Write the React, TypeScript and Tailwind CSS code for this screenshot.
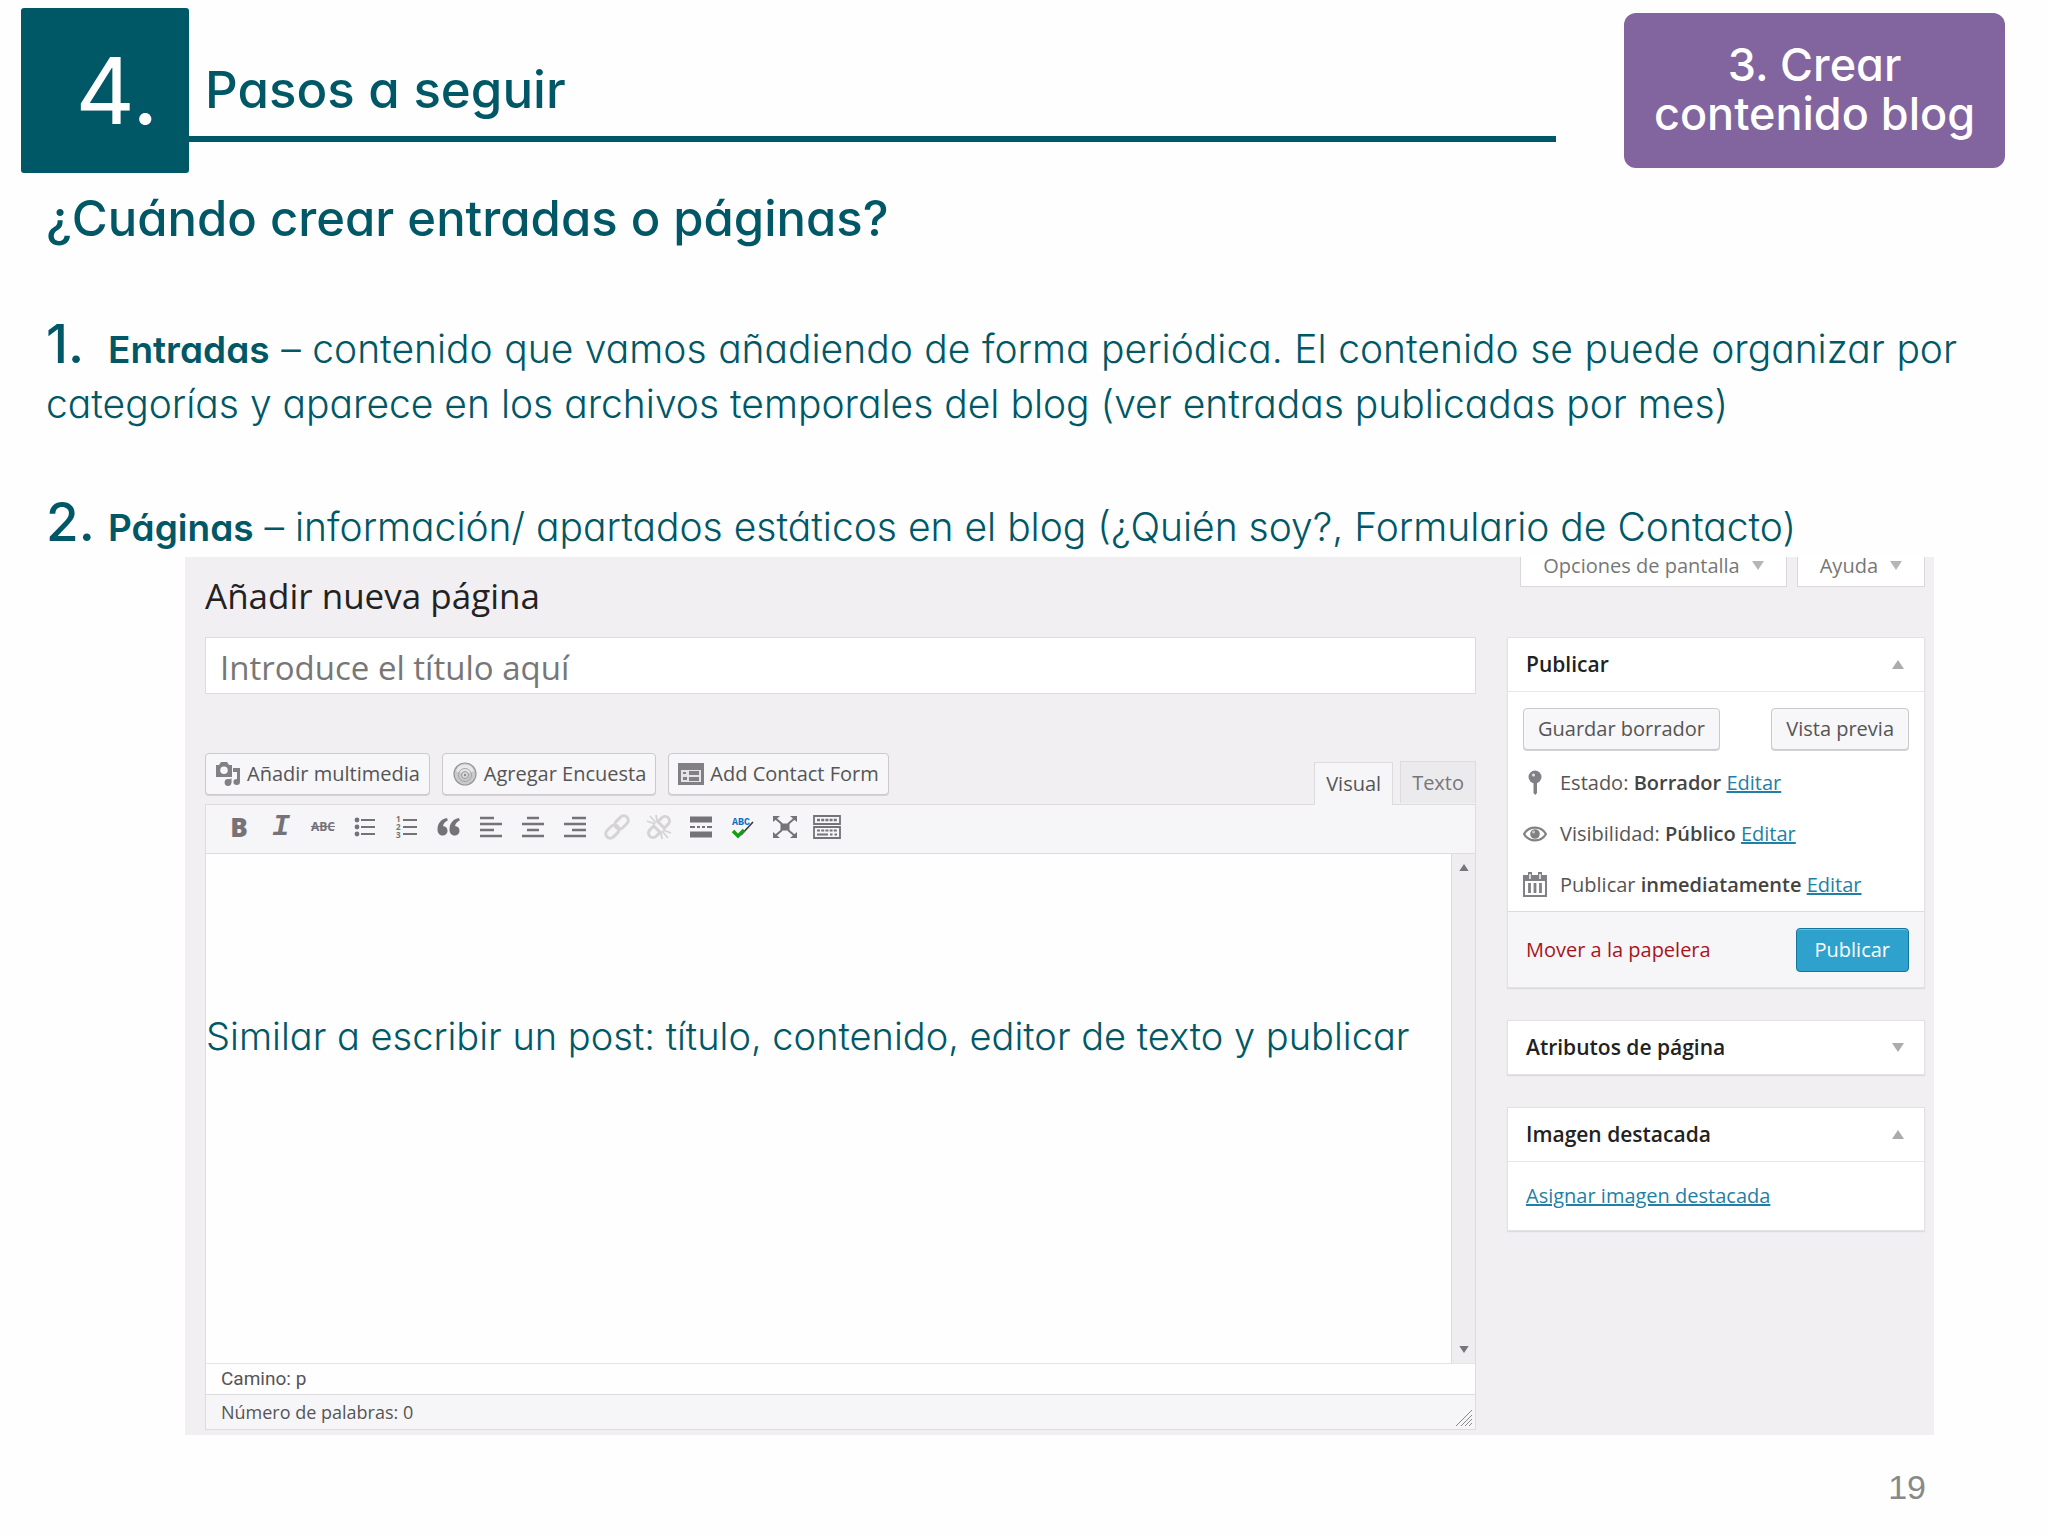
import type { ReactNode } from "react";

function Triangle({ up = false, className = "" }: { up?: boolean; className?: string }) {
  return (
    <svg viewBox="0 0 12 9" className={className || "h-[9px] w-3 text-[#a9abae]"} fill="currentColor" aria-hidden="true">
      <path d={up ? "M0 9 6 0l6 9z" : "M0 0h12L6 9z"} />
    </svg>
  );
}

function Icon({ children, className = "" }: { children: ReactNode; className?: string }) {
  return (
    <svg viewBox="0 0 28 28" className={`h-7 w-7 ${className}`} fill="none" stroke="currentColor" aria-hidden="true">
      {children}
    </svg>
  );
}

const tools: { label: string; icon: ReactNode }[] = [
  {
    label: "Negrita",
    icon: <span className="text-[26px] leading-7 font-extrabold">B</span>,
  },
  {
    label: "Cursiva",
    icon: <span className="font-['Liberation_Mono',monospace] text-[30px] leading-7 font-bold italic">I</span>,
  },
  {
    label: "Tachado",
    icon: <span className="text-[12px] leading-7 font-bold line-through">ABC</span>,
  },
  {
    label: "Lista con viñetas",
    icon: (
      <Icon>
        <path d="M10 7h14M10 14h14M10 21h14" strokeWidth="1.8" />
        <g fill="currentColor" stroke="none">
          <circle cx="6" cy="7" r="2.4" />
          <circle cx="6" cy="14" r="2.4" />
          <circle cx="6" cy="21" r="2.4" />
        </g>
      </Icon>
    ),
  },
  {
    label: "Lista numerada",
    icon: (
      <Icon>
        <path d="M10 7h14M10 14h14M10 21h14" strokeWidth="1.8" />
        <g fill="currentColor" stroke="none" fontSize="8" fontWeight="700">
          <text x="3" y="9">1</text>
          <text x="3" y="17">2</text>
          <text x="3" y="25">3</text>
        </g>
      </Icon>
    ),
  },
  {
    label: "Cita",
    icon: (
      <Icon>
        <g fill="currentColor" stroke="none">
          <path d="M12 5C6.500 6 2.500 10 2.500 16.500c0 3.500 2 6 5 6 2.800 0 5-2 5-4.800s-2-4.600-4.500-4.700C8.500 10.500 10 8.500 12.800 7.500z" />
          <path d="M24 5c-5.500 1-9.500 5-9.500 11.500 0 3.500 2 6 5 6 2.800 0 5-2 5-4.800s-2-4.600-4.500-4.700c.5-2.500 2-4.500 4.800-5.500z" />
        </g>
      </Icon>
    ),
  },
  {
    label: "Alinear a la izquierda",
    icon: <Icon><path d="M3 5h14M3 11h22M3 17h14M3 23h22" strokeWidth="2.6" /></Icon>,
  },
  {
    label: "Centrar",
    icon: <Icon><path d="M8 5h12M3 11h22M8 17h12M3 23h22" strokeWidth="2.6" /></Icon>,
  },
  {
    label: "Alinear a la derecha",
    icon: <Icon><path d="M11 5h14M3 11h22M11 17h14M3 23h22" strokeWidth="2.6" /></Icon>,
  },
  {
    label: "Insertar enlace",
    icon: (
      <Icon className="text-[#d5d3d6]">
        <g strokeWidth="3" transform="rotate(-45 14 14)">
          <rect x="0" y="9.500" width="15" height="9" rx="4.500" />
          <rect x="13" y="9.500" width="15" height="9" rx="4.500" />
        </g>
      </Icon>
    ),
  },
  {
    label: "Quitar enlace",
    icon: (
      <Icon className="text-[#d5d3d6]">
        <g strokeWidth="3" transform="rotate(-45 14 14)">
          <path d="M11 9.500H5.500a4.500 4.500 0 0 0 0 9H11zM17 9.500h5.500a4.500 4.500 0 0 1 0 9H17z" />
        </g>
        <path d="M2 8l8 3M5 3l6 7M11 2l1 6M26 20l-8-3M23 25l-6-7M17 26l-1-6" strokeWidth="1.800" />
      </Icon>
    ),
  },
  {
    label: "Insertar etiqueta Leer más",
    icon: (
      <Icon>
        <path d="M3 6.500h22M3 21.500h22" strokeWidth="6" />
        <path d="M3 14h5M10 14h3M15 14h3M20 14h5" strokeWidth="2.200" />
      </Icon>
    ),
  },
  {
    label: "Revisar ortografía",
    icon: (
      <Icon>
        <text x="3" y="12" fill="#0a6fc0" stroke="none" fontSize="10" fontWeight="700" fontFamily="Liberation Mono">ABC</text>
        <path d="M24 9 12 22" stroke="#333" strokeWidth="1.500" />
        <path d="M4 18l5 5 6-6" stroke="#12a012" strokeWidth="3.500" />
      </Icon>
    ),
  },
  {
    label: "Pantalla completa",
    icon: (
      <Icon>
        <path d="M4 5l7 6M24 5l-7 6M4 23l7-6M24 23l-7-6" strokeWidth="2" />
        <g fill="currentColor" stroke="none">
          <path d="M9.500 10.500h9v7h-9zM2 3h7l-7 6zM26 3h-7l7 6zM2 25h7l-7-6zM26 25h-7l7-6z" />
        </g>
      </Icon>
    ),
  },
  {
    label: "Mostrar la barra de herramientas",
    icon: (
      <Icon>
        <path d="M1 3h26v8H1zM1 14h26v11H1z" strokeWidth="1.800" />
        <path d="M4 7h20" strokeWidth="2.400" strokeDasharray="3 1.200" />
        <path d="M4 17.500h20" strokeWidth="2.200" strokeDasharray="3 1.200" />
        <path d="M4 21.500h11M17 21.500h2.500M21.500 21.500H24" strokeWidth="2.200" />
      </Icon>
    ),
  },
];

function MediaIcon() {
  return (
    <svg viewBox="0 0 26 26" className="h-[26px] w-[26px] text-[#828085]" fill="currentColor" aria-hidden="true">
      <path fillRule="evenodd" d="M1 4h3l2-3h6l2 3h3v12H1zM9 5.500a3.800 3.800 0 1 0 0 7.600 3.800 3.800 0 0 0 0-7.600z" />
      <path d="M18 7h7v14a3.300 3 0 1 1-3-3v-7h-4z" />
      <path d="M16.500 17v4.500h-3V19z" />
      <circle cx="13" cy="21.500" r="3.400" />
    </svg>
  );
}

function PollIcon() {
  return (
    <svg viewBox="0 0 26 26" className="h-[26px] w-[26px]" fill="none" aria-hidden="true">
      <circle cx="13" cy="13" r="11" fill="#c9c9cb" stroke="#98989b" strokeWidth="1.200" />
      <path d="M4 10a9.500 9.500 0 0 1 18 0c-5 3-13 3-18 0z" fill="#e8e8ea" />
      <circle cx="13" cy="14" r="6.500" stroke="#a4a4a7" />
      <circle cx="13" cy="14" r="3.500" stroke="#98989b" fill="#dcdcde" />
      <circle cx="13" cy="14" r="1.200" fill="#8c8c8f" />
    </svg>
  );
}

function FormIcon() {
  return (
    <svg viewBox="0 0 26 26" className="h-[26px] w-[26px]" aria-hidden="true">
      <path d="M0 2h26v22H0z" fill="#828085" />
      <path d="M3 9h20v12H3z" fill="#e4e3e6" />
      <path d="M11 10h10v4H11zM11 16h10v4H11zM5 11h3v2H5zM5 16h4v3H5z" fill="#828085" />
    </svg>
  );
}

const mediaButtons = [
  { label: "Añadir multimedia", icon: <MediaIcon /> },
  { label: "Agregar Encuesta", icon: <PollIcon /> },
  { label: "Add Contact Form", icon: <FormIcon /> },
];

const status = [
  {
    label: "Estado:",
    value: "Borrador",
    icon: (
      <svg viewBox="0 0 24 26" className="h-[26px] w-6" fill="#828085" aria-hidden="true">
        <circle cx="12" cy="7" r="6.500" />
        <path d="M10.500 12h3.500v11l-1.700 2-1.800-2z" />
        <circle cx="10.500" cy="5" r="1.500" fill="#e4e4e6" />
      </svg>
    ),
  },
  {
    label: "Visibilidad:",
    value: "Público",
    icon: (
      <svg viewBox="0 0 24 26" className="h-[26px] w-6" fill="none" aria-hidden="true">
        <path d="M1 13c5-8.500 17-8.500 22 0-5 8.500-17 8.500-22 0z" stroke="#828085" strokeWidth="2.200" />
        <circle cx="12" cy="13" r="4.800" fill="#828085" />
        <circle cx="10.500" cy="11" r="1.500" fill="#c8c8ca" />
      </svg>
    ),
  },
  {
    label: "Publicar",
    value: "inmediatamente",
    icon: (
      <svg viewBox="0 0 24 26" className="h-[26px] w-6" fill="none" aria-hidden="true">
        <path d="M1 4h22v20H1z" stroke="#828085" strokeWidth="2" />
        <path d="M0 3h24v6H0zM5 0h4v7H5zM15 0h4v7h-4z" fill="#828085" />
        <path d="M7 2v5M17 2v5" stroke="#fff" strokeWidth="1.400" />
        <path d="M6.500 11v10M12 11v10M17.500 11v10" stroke="#828085" strokeWidth="2.800" />
      </svg>
    ),
  },
];

const button =
  "flex h-[42px] items-center rounded border border-[#cbc9cc] bg-[#f7f6f8] text-[20px] text-[#555] shadow-[0_1px_0_#d5d3d6]";

function PostBox({ title, open, children }: { title: string; open?: boolean; children?: ReactNode }) {
  return (
    <section className="border border-[#e3e1e4] bg-white shadow-[0_1px_1px_#dddbde]">
      <div className="flex h-[53px] items-center justify-between pr-5 pl-[18px]">
        <h3 className="text-[21px] font-semibold text-[#222]">{title}</h3>
        <button type="button" aria-label={title}>
          <Triangle up={open} />
        </button>
      </div>
      {children}
    </section>
  );
}

export default function App() {
  return (
    <div className="min-h-screen bg-[#fefefe] font-['Inter',sans-serif] text-[#005867] [font-feature-settings:'cv11']">
      <header className="flex items-start pt-2 pr-[43px] pl-[21px]">
        <div className="flex h-[165px] w-[168px] items-center justify-center rounded-[3px] bg-[#005867] pl-6 text-[92px] leading-none text-white">
          4.
        </div>
        <div className="flex h-[134px] flex-1 items-end border-b-6 border-[#005867] pb-4 pl-4">
          <h1 className="text-[51px] leading-[60px] font-medium">Pasos a seguir</h1>
        </div>
        <div className="mt-[5px] ml-[68px] flex h-[155px] w-[381px] items-center justify-center rounded-xl bg-[#82649f] pb-1 text-center text-[45px] leading-[49px] font-medium text-white">
          <p>
            3. Crear
            <br />
            contenido blog
          </p>
        </div>
      </header>

      <section className="pt-4 pr-[91px] pb-[2px] pl-[46px]">
        <h2 className="text-[49px] leading-[60px] font-medium">¿Cuándo crear entradas o páginas?</h2>
        <p className="mt-[68px] text-justify text-[39px] leading-[54px] font-light">
          <span className="inline-block w-[62px] text-[53px] font-medium">1.</span>
          <b className="text-[37px] font-semibold">Entradas</b> – contenido que vamos añadiendo de forma periódica. El
          contenido se puede organizar por categorías y aparece en los archivos temporales del blog (ver entradas
          publicadas por mes)
        </p>
        <p className="mt-16 text-[39px] leading-[54px] font-light">
          <span className="inline-block w-[62px] text-[53px] font-medium">2.</span>
          <b className="text-[37px] font-semibold">Páginas</b> – información/ apartados estáticos en el blog (¿Quién
          soy?, Formulario de Contacto)
        </p>
      </section>

      <main className="mr-[114px] ml-[185px] bg-[#f1eff2] pr-[9px] pb-[5px] pl-5 font-['Open_Sans',sans-serif] text-[20px] text-[#555]">
        <div className="flex h-20 items-start justify-between">
          <h2 className="pt-4 text-[35px] leading-[46px] text-[#222]">Añadir nueva página</h2>
          <div className="flex gap-[10px] text-[#777]">
            <button type="button" className="flex h-[30px] items-center gap-3 border border-t-0 border-[#d9d7da] bg-white px-[22px] pb-3">
              Opciones de pantalla <Triangle className="h-[9px] w-3 text-[#b4b6b9]" />
            </button>
            <button type="button" className="flex h-[30px] items-center gap-3 border border-t-0 border-[#d9d7da] bg-white px-[22px] pb-3">
              Ayuda <Triangle className="h-[9px] w-3 text-[#b4b6b9]" />
            </button>
          </div>
        </div>

        <div className="flex items-start gap-[31px]">
          <div className="min-w-0 flex-1">
            <input
              type="text"
              aria-label="Título"
              placeholder="Introduce el título aquí"
              className="block h-[57px] w-full border border-[#dddbde] bg-white px-[14px] pt-1 text-[33px] placeholder:text-[#777]"
            />

            <div className="mt-[59px] flex h-[51px] items-start justify-between">
              <div className="flex gap-3">
                {mediaButtons.map((b) => (
                  <button key={b.label} type="button" className={`${button} gap-[6px] px-[9px]`}>
                    {b.icon}
                    {b.label}
                  </button>
                ))}
              </div>
              <div className="flex gap-[7px] self-end">
                <button type="button" className="relative top-px h-[43px] border border-b-0 border-[#dddbde] bg-[#f6f5f8] px-[11px]">
                  Visual
                </button>
                <button type="button" className="h-[42px] border border-b-0 border-[#dddbde] bg-[#ebebed] px-[11px] text-[#777]">
                  Texto
                </button>
              </div>
            </div>

            <div className="border border-[#dddbde]">
              <div className="flex h-[49px] items-center gap-[2px] border-b border-[#dddbde] bg-[#f6f5f8] pb-1 pl-[13px] text-[#757377]">
                {tools.map((tool) => (
                  <button key={tool.label} type="button" aria-label={tool.label} className="flex h-10 w-10 items-center justify-center">
                    {tool.icon}
                  </button>
                ))}
              </div>

              <div className="relative flex h-[509px]">
                <textarea aria-label="Contenido" className="block flex-1 resize-none bg-[#fefefe] outline-none" />
                <p className="absolute top-[158px] left-0 font-['Inter',sans-serif] text-[38px] leading-[48px] font-light text-[#005867]">
                  Similar a escribir un post: título, contenido, editor de texto y publicar
                </p>
                <div className="flex w-6 flex-col items-center justify-between border-l border-[#dddbde] bg-[#efedf0] py-[10px]">
                  <Triangle up className="h-[7px] w-3 text-[#77757a]" />
                  <Triangle className="h-[7px] w-3 text-[#77757a]" />
                </div>
              </div>

              <div className="h-[31px] border-t border-[#e6e4e7] bg-[#fefefe] pl-[15px] font-['Roboto',sans-serif] text-[19px] leading-[30px]">
                Camino: p
              </div>
              <div className="flex h-[35px] items-center justify-between border-t border-[#dddbde] bg-[#f6f5f8] pl-[15px] text-[18px]">
                Número de palabras: 0
                <svg viewBox="0 0 18 18" className="mt-3 mr-[2px] h-[18px] w-[18px]" stroke="#8a888c" aria-hidden="true">
                  <path d="M1 17 17 1M6 17 17 6M10 17l7-7M14 17l3-3" />
                </svg>
              </div>
            </div>
          </div>

          <aside className="flex w-[418px] flex-col gap-8">
            <PostBox title="Publicar" open>
              <div className="border-t border-[#e9e7ea] px-[15px] pt-4">
                <div className="flex justify-between">
                  <button type="button" className={`${button} px-[14px]`}>Guardar borrador</button>
                  <button type="button" className={`${button} px-[14px]`}>Vista previa</button>
                </div>
                <ul className="pt-[7px] pb-px">
                  {status.map((item) => (
                    <li key={item.value} className="flex h-[51px] items-center gap-[13px]">
                      {item.icon}
                      <span>
                        {item.label} <b className="font-semibold text-[#444]">{item.value}</b>{" "}
                        <a href="#" className="text-[#1f7fa6] underline">Editar</a>
                      </span>
                    </li>
                  ))}
                </ul>
              </div>
              <div className="flex h-[76px] items-center justify-between border-t border-[#dddbde] bg-[#f6f5f8] pr-[15px] pl-[18px]">
                <a href="#" className="text-[#a8141c]">Mover a la papelera</a>
                <button
                  type="button"
                  className="h-11 rounded border border-[#13749c] bg-[#2ea2cc] px-[18px] text-white shadow-[inset_0_1px_0_#6bbfdf]"
                >
                  Publicar
                </button>
              </div>
            </PostBox>

            <PostBox title="Atributos de página" />

            <PostBox title="Imagen destacada" open>
              <div className="flex h-[69px] items-center border-t border-[#e9e7ea] pl-[18px]">
                <a href="#" className="text-[#1f7fa6] underline">Asignar imagen destacada</a>
              </div>
            </PostBox>
          </aside>
        </div>
      </main>

      <footer className="pt-8 pr-[122px] text-right font-['Liberation_Sans',sans-serif] text-[34px] leading-[40px] text-[#898989]">
        19
      </footer>
    </div>
  );
}
